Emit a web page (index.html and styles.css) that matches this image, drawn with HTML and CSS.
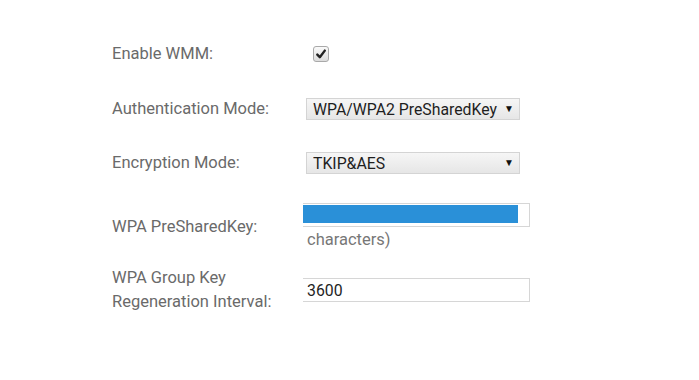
FILE: index.html
```html
<!doctype html>
<html lang="en">
<head>
    <meta charset="utf-8"/>
    <title>Wireless Security</title>
    <link rel="stylesheet" href="styles.css">
</head>
<body>
    <!--form rows-->
    <div class="form">
        <div class="row row-wmm">
            <label class="label">Enable WMM:</label>
            <div class="field">
                <span class="check">
                    <svg width="12" height="12" viewBox="0 0 12 12"><path d="M2.3 6.6 L4.8 9.2 L9.8 2.6" fill="none" stroke="#222" stroke-width="2.4" stroke-linecap="round" stroke-linejoin="round"/></svg>
                </span>
            </div>
        </div>
        <div class="row row-auth">
            <label class="label">Authentication Mode:</label>
            <div class="field">
                <span class="select">
                    <select><option>WPA/WPA2 PreSharedKey</option></select>
                </span>
            </div>
        </div>
        <div class="row row-enc">
            <label class="label">Encryption Mode:</label>
            <div class="field">
                <span class="select">
                    <select><option>TKIP&amp;AES</option></select>
                </span>
            </div>
        </div>
        <div class="row row-psk">
            <label class="label">WPA PreSharedKey:</label>
            <div class="field">
                <div class="input-wrap">
                    <input class="input" type="text" value="">
                    <span class="mask"></span>
                </div>
                <div class="hint">characters)</div>
            </div>
        </div>
        <div class="row row-regen">
            <label class="label">WPA Group Key<br>Regeneration Interval:</label>
            <div class="field">
                <input class="input" type="text" value="3600">
            </div>
        </div>
    </div>
</body>
</html>
```
FILE: styles.css
```css
* {
    margin: 0;
    padding: 0;
    box-sizing: border-box;
}

body {
    background: #fff;
    font-family: Roboto, "Liberation Sans", sans-serif;
}

.form {
    padding: 38px 0 0 112px;
}

.row {
    display: flex;
    align-items: center;
}

.label {
    width: 191px;
    font-size: 16.5px;
    line-height: 24px;
    color: #6a6a6a;
}

.row-wmm {
    height: 32px;
}

.row-auth {
    height: 32px;
    margin-top: 23px;
}

.row-enc {
    height: 32px;
    margin-top: 22px;
}

.row-psk {
    margin-top: 24px;
}

.row-regen {
    margin-top: 16px;
}

/* checkbox */
.check {
    display: flex;
    align-items: center;
    justify-content: center;
    width: 16px;
    height: 16px;
    margin-left: 10px;
    border: 1px solid #a9a9a9;
    border-radius: 3px;
    background: linear-gradient(#fafafa, #dcdcdc);
}

/* select */
.select {
    display: block;
    position: relative;
    margin-left: 3px;
    width: 214px;
    height: 22px;
}

.select select {
    appearance: none;
    -webkit-appearance: none;
    width: 100%;
    height: 100%;
    padding: 0 20px 0 6px;
    border: 1px solid #d4d4d4;
    border-radius: 0;
    background: linear-gradient(#f6f6f6, #e6e6e6);
    font-family: Roboto, "Liberation Sans", sans-serif;
    font-size: 15.8px;
    color: #1e1e1e;
    outline: none;
}

.select::after {
    content: "\25BC";
    position: absolute;
    right: 6px;
    top: 5px;
    font-size: 10px;
    line-height: 12px;
    color: #111;
    pointer-events: none;
}

/* text inputs */
.input-wrap {
    position: relative;
}

.input {
    display: block;
    width: 227px;
    height: 24px;
    padding: 0 4px;
    border: 1px solid #d6d6d6;
    border-left: 0;
    font-family: Roboto, "Liberation Sans", sans-serif;
    font-size: 15.8px;
    color: #1e1e1e;
    outline: none;
}

.mask {
    position: absolute;
    left: 0;
    top: 2px;
    width: 215px;
    height: 18px;
    background: #2a90d8;
}

.hint {
    padding-left: 4px;
    margin-top: 3px;
    font-size: 16.5px;
    line-height: 20px;
    color: #777;
}
```
